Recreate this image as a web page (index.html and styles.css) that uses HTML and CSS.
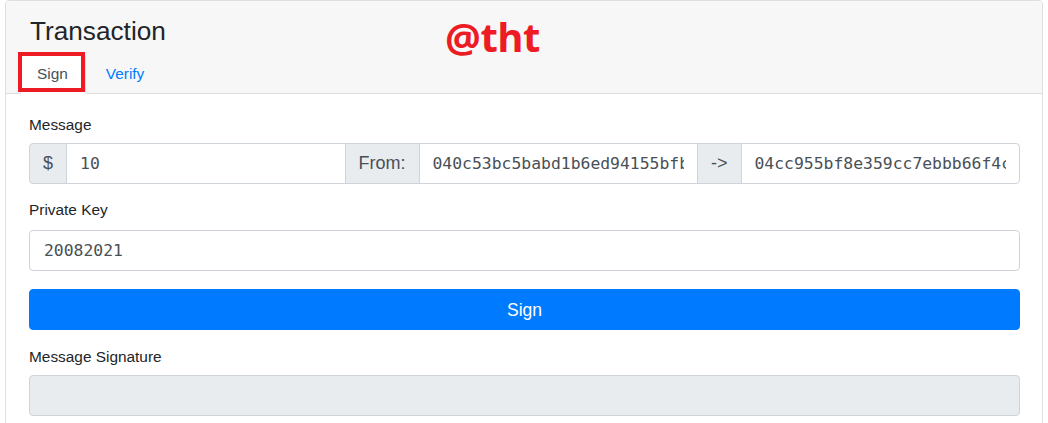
FILE: index.html
```html
<!DOCTYPE html>
<html lang="en">
<head>
<meta charset="utf-8">
<title>Transaction</title>
<link rel="stylesheet" href="styles.css">
</head>
<body>
<div class="card">
  <div class="card-header">
    <h1 class="title">Transaction</h1>
    <ul class="tabs">
      <li class="tab active">Sign<span class="mark"></span></li>
      <li class="tab link">Verify</li>
    </ul>
    <span class="watermark">@tht</span>
  </div>
  <div class="card-body">
    <label class="label label-first">Message</label>
    <div class="input-group">
      <span class="addon addon-dollar">$</span>
      <input class="field" type="text" value="10">
      <span class="addon">From:</span>
      <input class="field" type="text" value="040c53bc5babd1b6ed94155bfb2a7e1c9d3f">
      <span class="addon">-&gt;</span>
      <input class="field" type="text" value="04cc955bf8e359cc7ebbb66f4c81a2d0e7b5">
    </div>
    <label class="label label-key">Private Key</label>
    <input class="control" type="text" value="20082021">
    <button class="btn" type="button">Sign</button>
    <label class="label label-sig">Message Signature</label>
    <input class="control control-readonly" type="text" readonly>
  </div>
</div>
</body>
</html>
```
FILE: styles.css
```css
* { box-sizing: border-box; }

html, body {
  margin: 0;
  padding: 0;
  background: #ffffff;
}

body {
  padding: 0 5px;
  font-family: "Liberation Sans", Arial, sans-serif;
  color: #212529;
}

.card {
  border: 1px solid #dfdfdf;
  border-radius: 4px;
  background: #ffffff;
}

.card-header {
  position: relative;
  background: #f7f7f7;
  border-bottom: 1px solid #dfdfdf;
  border-radius: 3px 3px 0 0;
  padding: 14px 24px 0 24px;
}

.title {
  margin: 0 0 7px 0;
  font-size: 26.2px;
  line-height: 32px;
  font-weight: 400;
  color: #212529;
}

.tabs {
  list-style: none;
  margin: 0 0 -1px -10px;
  padding: 0;
  display: flex;
  gap: 3px;
}

.tab {
  position: relative;
  font-size: 15.4px;
  line-height: 24px;
  padding: 7px 17px 7px 16px;
  border: 1px solid transparent;
  border-radius: 4px 4px 0 0;
}

.tab.active {
  background: #ffffff;
  border-color: #dee2e6 #dee2e6 #ffffff;
  color: #495057;
}

.tab.link {
  color: #007bff;
}

.mark {
  position: absolute;
  left: -3px;
  top: -3px;
  width: 67px;
  height: 40px;
  border: 4px solid #ed1c24;
}

.watermark {
  position: absolute;
  left: 439px;
  top: 16px;
  font-family: "Open Sans", sans-serif;
  font-weight: 700;
  font-size: 40px;
  line-height: 40px;
  letter-spacing: -0.5px;
  color: #ed1c24;
}

.card-body {
  padding: 19px 22px 20px 23px;
  display: flex;
  flex-direction: column;
}

.label {
  display: block;
  font-size: 15.4px;
  line-height: 24px;
  color: #212529;
}

.label-first { margin-bottom: 6px; }
.label-key { margin-top: 14px; margin-bottom: 8px; }
.label-sig { margin-top: 15px; margin-bottom: 6px; }

.input-group {
  display: flex;
  height: 41px;
}

.addon {
  display: flex;
  align-items: center;
  padding: 0 13px;
  background: #e9ecef;
  border: 1px solid #ced4da;
  color: #495057;
  font-size: 18px;
  white-space: nowrap;
}

.input-group > * + * { margin-left: -1px; }

.addon-dollar { border-radius: 4px 0 0 4px; }

.field {
  flex: 1 1 0;
  min-width: 0;
  height: 41px;
  border: 1px solid #ced4da;
  padding: 0 13px;
  font-family: "DejaVu Sans Mono", monospace;
  font-size: 16.4px;
  color: #495057;
  background: #ffffff;
  outline: none;
}

.input-group > .field:last-child { border-radius: 0 4px 4px 0; }

.control {
  width: 100%;
  height: 41px;
  border: 1px solid #ced4da;
  border-radius: 4px;
  padding: 0 14px;
  font-family: "DejaVu Sans Mono", monospace;
  font-size: 16.4px;
  color: #495057;
  background: #ffffff;
  outline: none;
}

.control-readonly {
  background: #e9ecef;
}

.btn {
  margin-top: 18px;
  width: 100%;
  height: 41px;
  border: 1px solid #007bff;
  border-radius: 4px;
  background: #007bff;
  color: #ffffff;
  font-family: "Liberation Sans", Arial, sans-serif;
  font-size: 17.5px;
  line-height: 24px;
  padding: 0;
}
```
